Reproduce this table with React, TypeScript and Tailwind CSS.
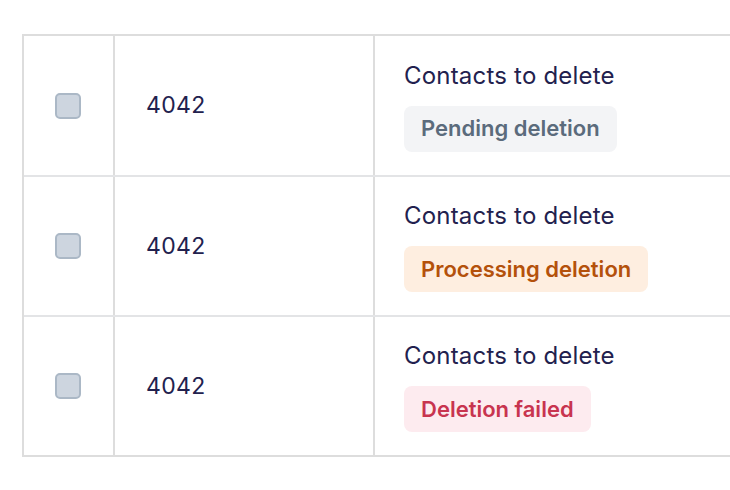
import React from "react";

const rows = [
  { label: "Pending deletion", cls: "bg-[#f3f4f6] text-[#5b6b7c]" },
  { label: "Processing deletion", cls: "bg-[#feeee0] text-[#b4510b]" },
  { label: "Deletion failed", cls: "bg-[#fdebef] text-[#c8344f]" },
];

export default function App() {
  return (
    <div className="w-[730px] h-[490px] bg-white overflow-hidden pt-[34px] pl-[22px]" style={{ fontFamily: "Inter, 'Noto Sans', sans-serif" }}>
      <div className="w-[760px] border-2 border-[#dddddd] border-r-0">
        {rows.map((r, i) => (
          <div key={i} className={`flex ${i > 0 ? "h-[140px] border-t-2 border-[#e3e4e6]" : "h-[139px]"}`}>
            <div className="w-[91px] shrink-0 flex items-center justify-center border-r-2 border-[#dddddd]">
              <div className="w-[26px] h-[26px] rounded-[5px] bg-[#cdd5df] border-2 border-[#abb8c6] -ml-[1px]" />
            </div>
            <div className="w-[260px] shrink-0 flex items-center pl-[31px] border-r-2 border-[#dddddd] text-[23px] text-[#22214e] tracking-[0.3px]">
              4042
            </div>
            <div className="flex-1 flex flex-col justify-center pl-[29px] pt-[2px]">
              <div className="text-[24px] leading-[28px] text-[#22214e] tracking-[0.2px]">Contacts to delete</div>
              <div className="mt-[16px]">
                <span className={`inline-flex items-center h-[46px] px-[17px] rounded-[8px] text-[22px] font-semibold ${r.cls}`}>
                  {r.label}
                </span>
              </div>
            </div>
          </div>
        ))}
      </div>
    </div>
  );
}
